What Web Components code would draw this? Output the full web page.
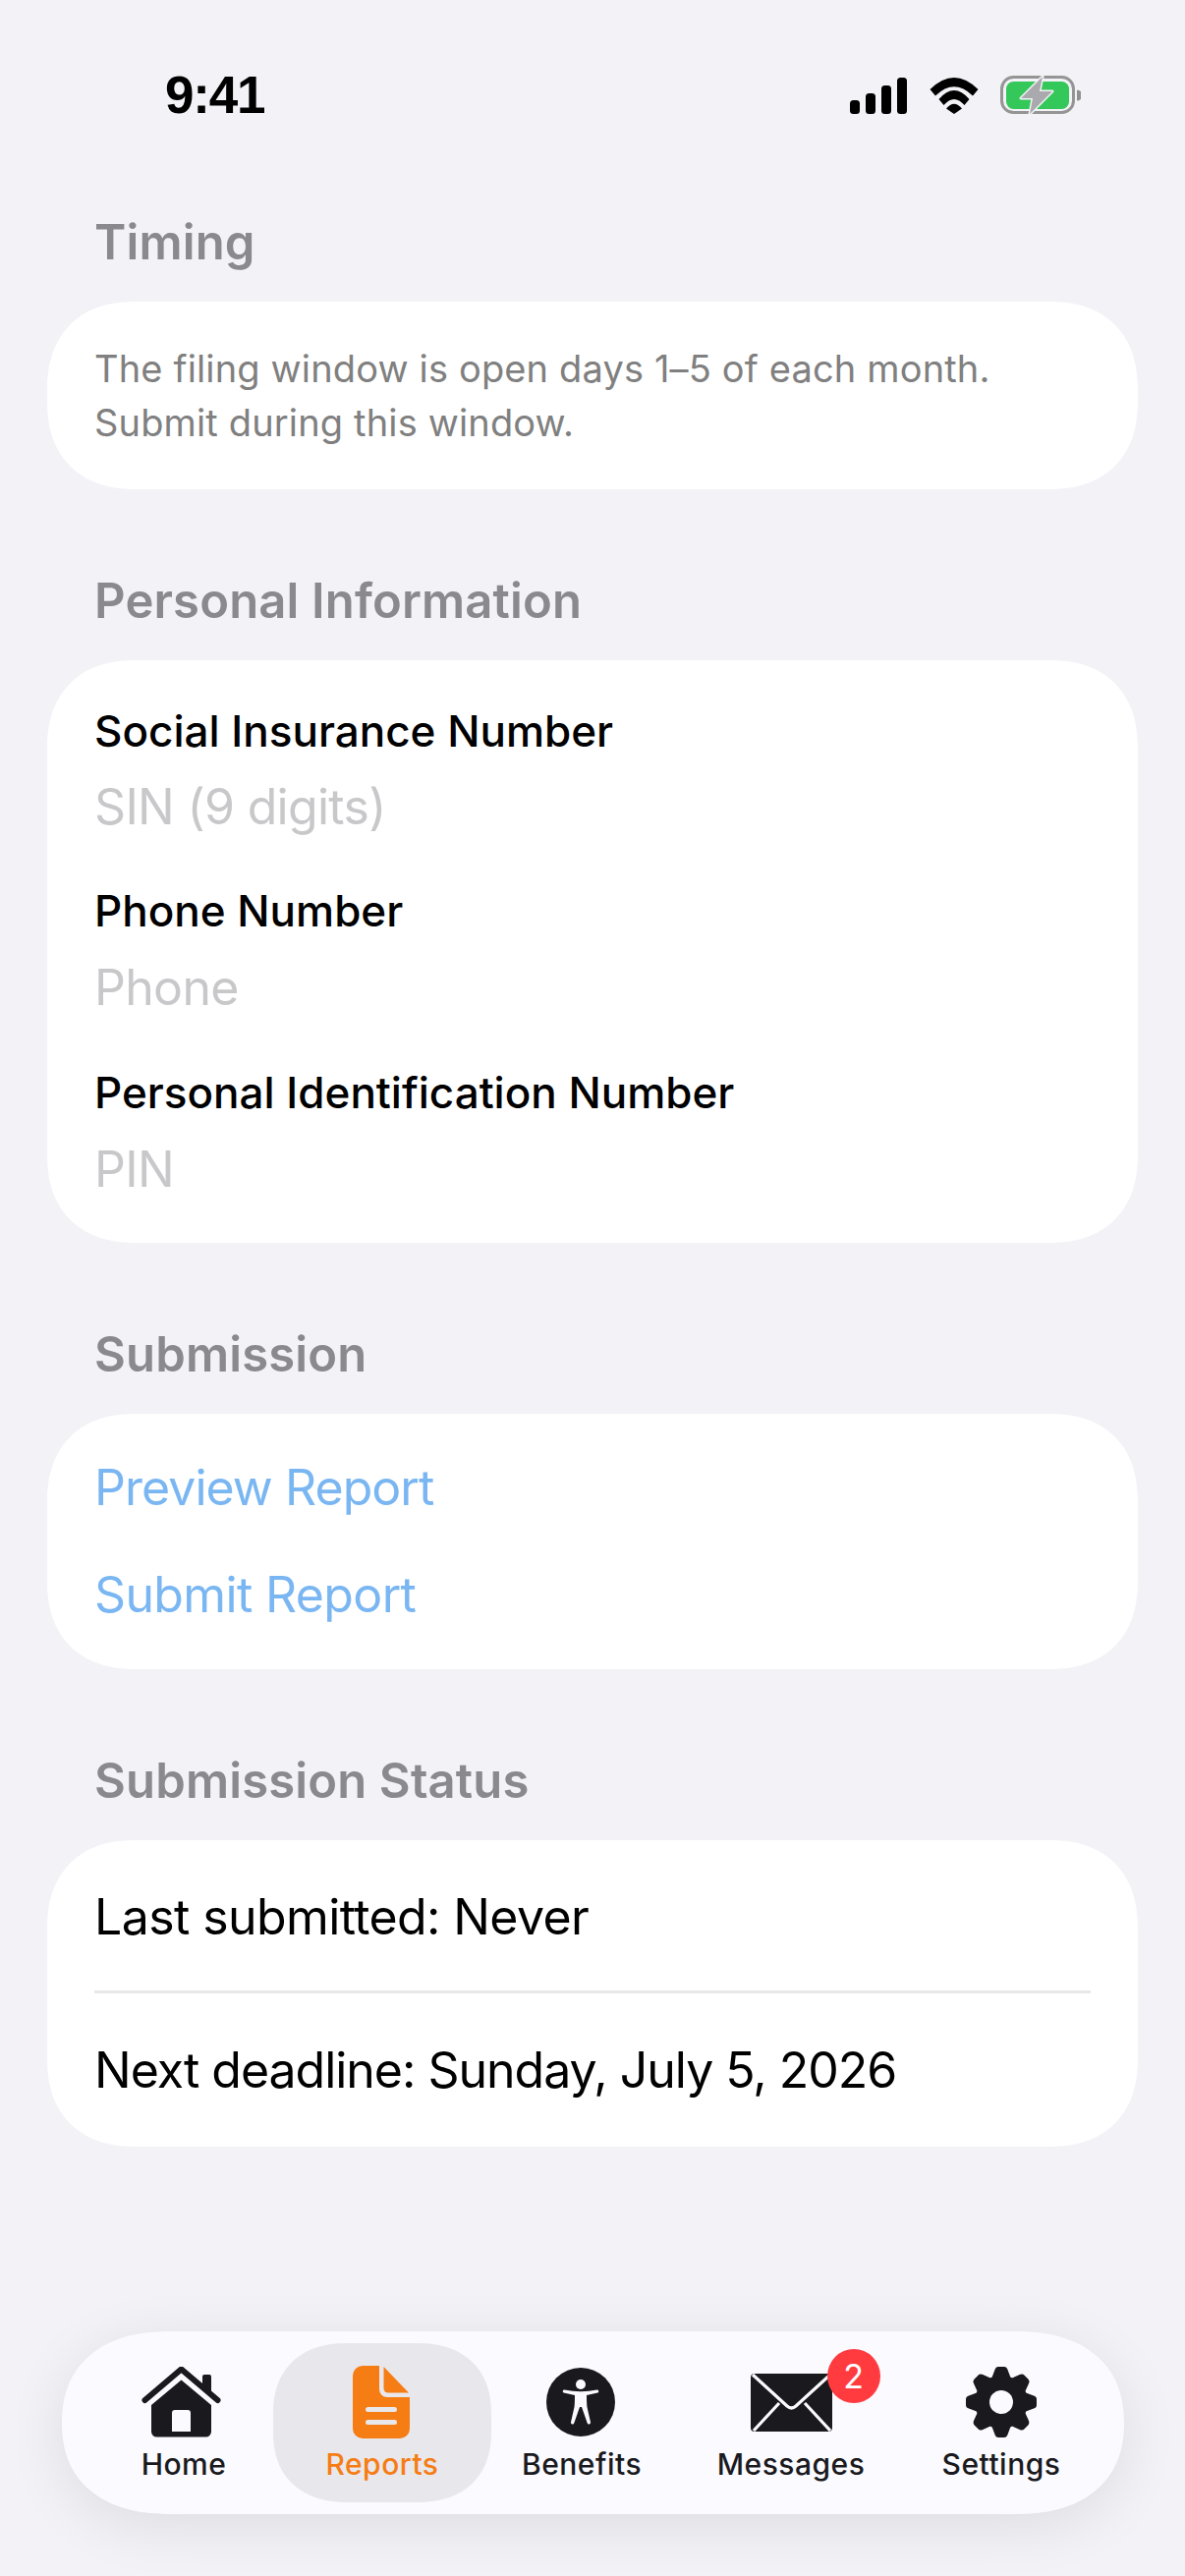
<!DOCTYPE html>
<html lang="en">
<head>
<meta charset="utf-8">
<title>Reports</title>
<style>
html,body{margin:0;padding:0;background:#f2f2f7;}
body{width:1206px;height:2622px;overflow:hidden;font-family:Inter,"Noto Sans",sans-serif;display:flex;flex-direction:column;}
</style>
</head>
<body>
<status-bar></status-bar>
<main-content>
  <form-section title="Timing">
    <note-text>The filing window is open days 1–5 of each month.<br>Submit during this window.</note-text>
  </form-section>
  <form-section title="Personal Information">
    <text-field label="Social Insurance Number" placeholder="SIN (9 digits)"></text-field>
    <text-field label="Phone Number" placeholder="Phone"></text-field>
    <text-field label="Personal Identification Number" placeholder="PIN"></text-field>
  </form-section>
  <form-section title="Submission">
    <action-link>Preview Report</action-link>
    <action-link style="--ls:-.65px">Submit Report</action-link>
  </form-section>
  <form-section title="Submission Status">
    <status-row divider style="--ls:-.6px">Last submitted: Never</status-row>
    <status-row style="--ls:-1.020px">Next deadline: Sunday, July 5, 2026</status-row>
  </form-section>
</main-content>
<tab-bar>
  <tab-item label="Home" icon="home" style="--w:182px;--dx:-2.500px"></tab-item>
  <tab-item label="Reports" icon="doc" active style="--w:222px;--dx:-1px"></tab-item>
  <tab-item label="Benefits" icon="access" style="--w:184px;--dx:-1.500px"></tab-item>
  <tab-item label="Messages" icon="mail" badge="2" style="--w:242px"></tab-item>
  <tab-item label="Settings" icon="gear" style="--w:186px"></tab-item>
</tab-bar>
<script>
function shadow(el, html){ el.attachShadow({mode:'open'}).innerHTML = html; }

class StatusBar extends HTMLElement{
  connectedCallback(){
    shadow(this, `<style>
      :host{display:flex;align-items:flex-start;justify-content:space-between;height:220px;box-sizing:border-box;padding:78px 106px 0 168px;flex:none}
      .time{font:700 53px/38px "Liberation Sans",Arial,sans-serif;color:#000;letter-spacing:-1.2px}
      .icons{display:flex;align-items:flex-start;gap:23px}
      svg{display:block}
    </style>
    <div class="time">9:41</div>
    <div class="icons">
      <svg width="58" height="38" viewBox="0 0 58 38" fill="#000" aria-hidden="true">
        <rect x="0" y="24" width="10" height="14" rx="3.5"/><rect x="16" y="17" width="10" height="21" rx="3.5"/><rect x="32" y="9" width="10" height="29" rx="3.5"/><rect x="48" y="1" width="10" height="37" rx="3.5"/>
      </svg>
      <svg width="50" height="38" viewBox="0 0 50 38" fill="#000" aria-hidden="true">
        <path d="M.5 13Q25-11 49.500 13L44 19.500Q25 1 6 19.500Z"/>
        <path d="M9.500 23Q25 5 40.500 23L35.500 29Q25 17 14.500 29Z"/>
        <path d="M17 32.500Q25 23 33 32.500L25 38Z"/>
      </svg>
      <svg width="82" height="40" viewBox="0 0 82 40" aria-hidden="true" style="margin-left:-1px;margin-top:-1px">
        <rect x="1.500" y="1.500" width="73" height="36" rx="12" fill="none" stroke="#959595" stroke-width="3"/>
        <rect x="6" y="6" width="64" height="28" rx="7.500" fill="#34c759"/>
        <path d="M78 14.500a5 5 0 0 1 0 11z" fill="#8f8f8f"/>
        <path d="M43 1L21 23H33L30 39L53 16H40Z" fill="#a9a9ae" stroke="#f2f2f7" stroke-width="3" stroke-linejoin="round" paint-order="stroke"/>
      </svg>
    </div>`);
  }
}
class MainContent extends HTMLElement{
  connectedCallback(){
    shadow(this, `<style>
      :host{display:flex;flex-direction:column;gap:87px;padding:0 48px;flex:none}
    </style><slot></slot>`);
  }
}
class FormSection extends HTMLElement{
  connectedCallback(){
    shadow(this, `<style>
      :host{display:block}
      h2{margin:0 0 33px;padding-left:48px;font:600 49px/54px Inter,sans-serif;color:#8a8a8e;letter-spacing:.15px}
      .card{background:#fff;border-radius:80px;padding:0 48px;display:flex;flex-direction:column}
      @supports (corner-shape:superellipse(1.2)){.card{border-radius:90px;corner-shape:superellipse(1.2)}}
    </style><h2>${this.getAttribute('title')}</h2><div class="card"><slot></slot></div>`);
    this.removeAttribute('title');
  }
}
class NoteText extends HTMLElement{
  connectedCallback(){
    shadow(this, `<style>
      :host{display:block;padding:41px 0;font:400 38px/54.500px Inter,sans-serif;color:#808080;letter-spacing:.15px}
    </style><slot></slot>`);
  }
}
class TextField extends HTMLElement{
  connectedCallback(){
    shadow(this, `<style>
      :host{display:block;margin-bottom:52px;--pm:23px}
      :host(:first-child){margin-top:46px;margin-bottom:51px;--pm:22px}
      :host(:last-child){margin-bottom:46px}
      .l{font:500 44px/52px Inter,sans-serif;color:#000}
      .p{font:400 50px/58px Inter,sans-serif;color:#c8c8ca;margin-top:var(--pm);letter-spacing:-.7px}
    </style><div class="l">${this.getAttribute('label')}</div><div class="p">${this.getAttribute('placeholder')}</div>`);
  }
}
class ActionLink extends HTMLElement{
  connectedCallback(){
    shadow(this, `<style>
      :host{display:block;height:109px;font:400 50px/109px Inter,sans-serif;color:#7ab6f2;letter-spacing:var(--ls,-.95px)}
      :host(:first-child){margin-top:21px}
      :host(:last-child){margin-bottom:21px}
    </style><slot></slot>`);
  }
}
class StatusRow extends HTMLElement{
  connectedCallback(){
    shadow(this, `<style>
      :host{display:block;font:400 50px/156px Inter,sans-serif;color:#000;height:156px;box-sizing:border-box;letter-spacing:var(--ls,-.9px);white-space:nowrap}
      :host([divider]){border-bottom:3px solid #e8e8e8}
    </style><slot></slot>`);
  }
}
const ICONS = {
  home:`<svg width="81" height="72" viewBox="0 0 81 72" fill="#1a1a1e" aria-hidden="true">
    <path d="M3.500 34L40.500 2.500L77.500 34" fill="none" stroke="#1a1a1e" stroke-width="6" stroke-linecap="round" stroke-linejoin="round"/>
    <path d="M62 20V10a2 2 0 0 1 2-2h5a2 2 0 0 1 2 2V27Z"/>
    <path fill-rule="evenodd" d="M40.500 13.500L71 39V66a5.500 5.500 0 0 1-5.500 5.500H15.500A5.500 5.500 0 0 1 10 66V39ZM31 47a3 3 0 0 1 3-3H47a3 3 0 0 1 3 3V66H31Z"/>
  </svg>`,
  doc:`<svg width="58" height="74" viewBox="0 0 58 74" fill="#f67c14" aria-hidden="true">
    <path d="M10 0H27V24a8 8 0 0 0 8 8H58V64a10 10 0 0 1-10 10H10A10 10 0 0 1 0 64V10A10 10 0 0 1 10 0Z"/>
    <path d="M31.500 1L57 27.500H36a4.500 4.500 0 0 1-4.500-4.500Z"/>
    <rect x="13" y="42" width="32" height="5" rx="2.500" fill="#e8e8ec"/><rect x="13" y="55" width="32" height="5" rx="2.500" fill="#e8e8ec"/>
  </svg>`,
  access:`<svg width="70" height="70" viewBox="0 0 70 70" aria-hidden="true">
    <circle cx="35" cy="35" r="35" fill="#1a1a1e"/><circle cx="35" cy="17" r="5" fill="#fafaff"/>
    <path fill="#fafaff" d="M18.500 22.500Q35 26 51.500 22.500a1.600 1.600 0 0 1 .7 3.100L41 28Q41 36 41.500 40L45 55.500a1.700 1.700 0 0 1-3.300.8L36 40H34L28.300 56.300a1.700 1.700 0 0 1-3.300-.8L28.500 40Q29 36 29 28L17.800 25.600a1.600 1.600 0 0 1 .7-3.100Z"/>
  </svg>`,
  mail:`<svg width="83" height="59" viewBox="0 0 83 59" aria-hidden="true">
    <rect width="83" height="59" rx="4" fill="#1a1a1e"/>
    <path d="M2 1L37 33Q41.500 37 46 33L81 1M29 30L3 58M55 30L81 58" fill="none" stroke="#fafaff" stroke-width="3.200"/>
  </svg>`,
  gear:(()=>{let t='';for(let i=0;i<8;i++)t+=`<path transform="rotate(${i*45})" d="M-9.500-25L-6.500-33Q-5.500-36-3-36H3Q5.500-36 6.500-33L9.500-25Z"/>`;
    return `<svg width="72" height="72" viewBox="-36 -36 72 72" fill="#1a1a1e" aria-hidden="true">${t}<circle r="27"/><circle r="12" fill="#fafaff"/></svg>`;})()
};
class TabBar extends HTMLElement{
  connectedCallback(){
    shadow(this, `<style>
      :host{display:flex;position:absolute;left:63px;top:2373px;width:1081px;height:186px;box-sizing:border-box;padding:12px 32px 12px 33px;background:#fafaff;border-radius:93px;box-shadow:0 12px 60px rgba(0,0,0,.09)}
      @supports (corner-shape:superellipse(1.2)){:host{border-radius:110px / 93px;corner-shape:superellipse(1.2)}}
    </style><slot></slot>`);
  }
}
class TabItem extends HTMLElement{
  connectedCallback(){
    const badge = this.getAttribute('badge');
    shadow(this, `<style>
      :host{display:block;width:var(--w);flex:none}
      .wrap{position:relative;height:162px;display:flex;flex-direction:column;align-items:center;border-radius:70px;font:500 30px/36px Inter,sans-serif;color:#1a1a1e}
      @supports (corner-shape:superellipse(1.2)){.wrap{border-radius:76px / 72px;corner-shape:superellipse(1.2)}}
      :host([active]) .wrap{background:#e8e8ec;color:#f67c14}
      .ico{height:76px;margin-top:22px;display:flex;align-items:center;justify-content:center;position:relative;left:var(--dx,0px)}
      .lb{margin-top:7px;white-space:nowrap;letter-spacing:.5px}
      .badge{position:absolute;left:78px;top:-16px;width:54px;height:55px;border-radius:50%;background:#ff3b40;color:#fff;font:400 34px/55px Inter,sans-serif;text-align:center}
    </style><div class="wrap"><div class="ico">${ICONS[this.getAttribute('icon')]}${badge?`<span class="badge">${badge}</span>`:''}</div><div class="lb">${this.getAttribute('label')}</div></div>`);
  }
}
customElements.define('status-bar',StatusBar);
customElements.define('main-content',MainContent);
customElements.define('form-section',FormSection);
customElements.define('note-text',NoteText);
customElements.define('text-field',TextField);
customElements.define('action-link',ActionLink);
customElements.define('status-row',StatusRow);
customElements.define('tab-bar',TabBar);
customElements.define('tab-item',TabItem);
</script>
</body>
</html>
